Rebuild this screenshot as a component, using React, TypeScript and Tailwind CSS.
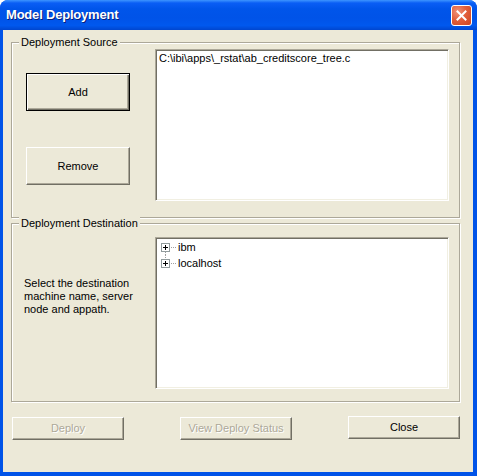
import type { ReactNode } from 'react';

const font = { fontFamily: '"Liberation Sans", Arial, sans-serif' };

function GroupBox({ label, className, children }: { label: string; className: string; children: ReactNode }) {
  return (
    <div className={`relative border border-[#aca899] shadow-[inset_1px_1px_0_#fff,1px_1px_0_#fff] ${className}`}>
      <span className="absolute -top-[7px] left-[7px] bg-[#ece9d8] px-[2px] leading-[13px]">{label}</span>
      {children}
    </div>
  );
}

function Button({ children, primary, disabled, className = '' }: { children: ReactNode; primary?: boolean; disabled?: boolean; className?: string }) {
  const frame = primary
    ? 'border border-black shadow-[inset_1px_1px_0_#fff,inset_-1px_-1px_0_#716f64,inset_-2px_-2px_0_#aca899]'
    : 'border border-t-white border-l-white border-r-[#716f64] border-b-[#716f64] shadow-[inset_-1px_-1px_0_#aca899]';
  return (
    <button
      disabled={disabled}
      className={`flex items-center justify-center bg-[#ece9d8] ${frame} ${
        disabled ? 'text-[#aca899] [text-shadow:1px_1px_0_#fff]' : 'text-black'
      } ${className}`}
    >
      {children}
    </button>
  );
}

function Sunken({ className, children }: { className: string; children?: ReactNode }) {
  return (
    <div
      className={`bg-white border border-t-[#aca899] border-l-[#aca899] border-r-white border-b-white shadow-[inset_1px_1px_0_#716f64,inset_-1px_-1px_0_#f1efe2] ${className}`}
    >
      {children}
    </div>
  );
}

function TreeRow({ label, first }: { label: string; first?: boolean }) {
  return (
    <div className="flex h-[16px] items-center">
      <svg width="21" height="16" viewBox="0 0 21 16" className="shrink-0">
        {first ? (
          <line x1="9.5" y1="13" x2="9.5" y2="16" stroke="#a0a0a0" strokeDasharray="1 1" />
        ) : (
          <line x1="9.5" y1="0" x2="9.5" y2="4" stroke="#a0a0a0" strokeDasharray="1 1" />
        )}
        <rect x="5.5" y="4.5" width="8" height="8" fill="#fff" stroke="#919b9c" />
        <line x1="7" y1="8.5" x2="12" y2="8.5" stroke="#000" />
        <line x1="9.5" y1="6" x2="9.5" y2="11" stroke="#000" />
        <line x1="15" y1="8.5" x2="20" y2="8.5" stroke="#a0a0a0" strokeDasharray="1 1" />
      </svg>
      <span className="ml-px leading-[13px]">{label}</span>
    </div>
  );
}

export default function App() {
  return (
    <div style={font} className="w-[477px] h-[476px] flex flex-col rounded-t-[8px] bg-[#0053e8] text-[11px] text-black">
      <div className="h-[30px] shrink-0 flex items-center justify-between rounded-t-[8px] bg-[linear-gradient(to_bottom,#3d95ff_0%,#0a5ef5_10%,#0055ea_30%,#0053e8_60%,#0058ee_85%,#0046cf_100%)] pl-[6px] pr-[5px]">
        <span className="text-[13px] font-bold text-white tracking-[-0.2px] [text-shadow:1px_1px_0_#0a1f7a]">Model Deployment</span>
        <div className="w-[21px] h-[21px] mt-px rounded-[3px] border border-white bg-[radial-gradient(circle_at_30%_30%,#f0937a_0%,#e25f3b_45%,#cc4420_100%)] flex items-center justify-center">
          <svg width="11" height="11" viewBox="0 0 11 11">
            <path d="M1.5 1.5 L9.5 9.5 M9.5 1.5 L1.5 9.5" stroke="#fff" strokeWidth="2" strokeLinecap="square" />
          </svg>
        </div>
      </div>

      <div className="flex-1 ml-[3px] mr-[4px] mb-[4px] bg-[#ece9d8] flex flex-col pt-[12px] pl-[8px]">
        <GroupBox label="Deployment Source" className="w-[449px] h-[176px] flex">
          <div className="w-[143px] pl-[14px] pt-[30px] flex flex-col">
            <Button primary className="w-[104px] h-[38px]">Add</Button>
            <Button className="w-[104px] h-[38px] mt-[36px]">Remove</Button>
          </div>
          <Sunken className="w-[294px] h-[152px] mt-[6px] pl-[3px] pt-[2px]">
            <div className="leading-[13px]">C:\ibi\apps\_rstat\ab_creditscore_tree.c</div>
          </Sunken>
        </GroupBox>

        <GroupBox label="Deployment Destination" className="w-[449px] h-[179px] mt-[5px] flex">
          <div className="w-[143px] pl-[12px] pt-[53px] leading-[13px]">
            Select the destination
            <br />
            machine name, server
            <br />
            node and appath.
          </div>
          <Sunken className="w-[294px] h-[152px] mt-[13px] pt-[1px]">
            <TreeRow label="ibm" first />
            <TreeRow label="localhost" />
          </Sunken>
        </GroupBox>

        <div className="w-[448px] ml-px mt-[14px] flex items-start justify-between">
          <Button disabled className="w-[112px] h-[23px] mt-px">Deploy</Button>
          <Button disabled className="w-[112px] h-[23px] mt-px">View Deploy Status</Button>
          <Button className="w-[112px] h-[23px]">Close</Button>
        </div>
      </div>
    </div>
  );
}
